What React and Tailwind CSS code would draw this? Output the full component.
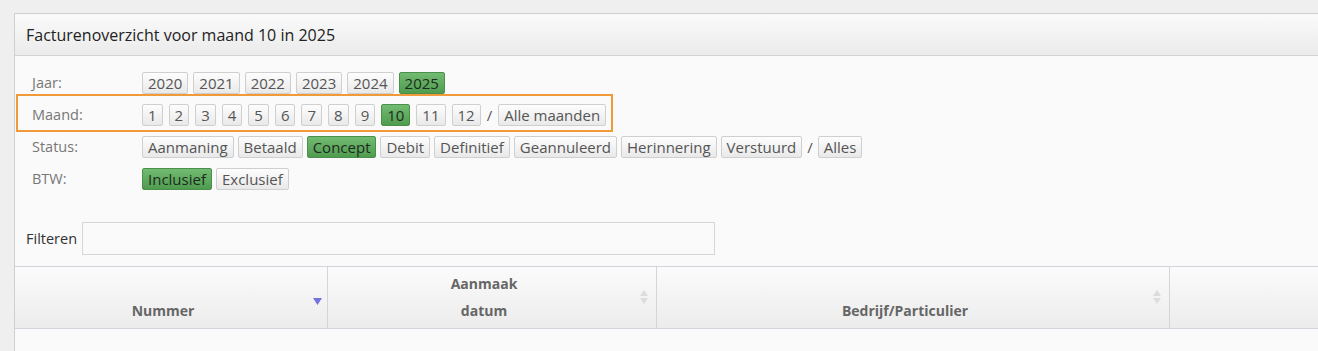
import React from "react";

const years = ["2020", "2021", "2022", "2023", "2024", "2025"];
const months = ["1", "2", "3", "4", "5", "6", "7", "8", "9", "10", "11", "12"];
const statuses = ["Aanmaning", "Betaald", "Concept", "Debit", "Definitief", "Geannuleerd", "Herinnering", "Verstuurd"];

function Btn({ label, active }) {
  return (
    <span
      className={
        "inline-flex h-[22px] items-center rounded-[2px] border px-[5px] text-[15px] leading-none " +
        (active
          ? "border-[#4a8f4a] bg-gradient-to-b from-[#72bb72] to-[#4f9c4f] text-[#1e2a1e]"
          : "border-[#cfcfcf] bg-gradient-to-b from-[#fdfdfd] to-[#e9e9e9] text-[#555]")
      }
    >
      {label}
    </span>
  );
}

function Row({ label, gap, children }) {
  return (
    <div className="flex h-[32px] items-center">
      <div className="w-[110px] text-[14.5px] text-[#777]">{label}</div>
      <div className={"flex items-center " + gap}>{children}</div>
    </div>
  );
}

function SortBoth() {
  return (
    <svg width="8" height="14" viewBox="0 0 8 14" className="absolute right-[8px] top-[23px]">
      <path d="M4 0 L8 6 L0 6 Z" fill="#dcdcdc" />
      <path d="M0 8 L8 8 L4 14 Z" fill="#dcdcdc" />
    </svg>
  );
}

export default function App() {
  return (
    <div className="h-[351px] w-[1318px] overflow-hidden bg-[#efefef] pt-[13px] pl-[14px] font-['Open_Sans',sans-serif]">
      <div className="h-full border-l border-t border-[#cfcfcf] bg-[#fafafa]">
        <div className="flex h-[42px] items-center border-b border-[#d2d2d2] bg-gradient-to-b from-[#fafafa] to-[#ebebeb] pl-[11px] text-[16px] text-[#222]">
          Facturenoverzicht voor maand 10 in 2025
        </div>

        <div className="pl-[17px] pt-[11px]">
          <Row label="Jaar:" gap="gap-[5px]">
            {years.map((y) => (
              <Btn key={y} label={y} active={y === "2025"} />
            ))}
          </Row>
          <div className="relative w-fit">
            <Row label="Maand:" gap="gap-[6px]">
              {months.map((m) => (
                <Btn key={m} label={m} active={m === "10"} />
              ))}
              <span className="text-[15px] text-[#555]">/</span>
              <Btn label="Alle maanden" />
            </Row>
            <div className="pointer-events-none absolute -top-[5px] -bottom-[1px] -left-[16px] -right-[7px] border-2 border-[#f09a3a]" />
          </div>
          <Row label="Status:" gap="gap-[4px]">
            {statuses.map((s) => (
              <Btn key={s} label={s} active={s === "Concept"} />
            ))}
            <span className="px-[1px] text-[15px] text-[#555]">/</span>
            <Btn label="Alles" />
          </Row>
          <Row label="BTW:" gap="gap-[4px]">
            <Btn label="Inclusief" active />
            <Btn label="Exclusief" />
          </Row>
        </div>

        <div className="mt-[27px] flex items-center pl-[11px]">
          <span className="mr-[5px] text-[14.5px] text-[#333]">Filteren</span>
          <div className="h-[33px] w-[633px] border border-[#d6d6d6] bg-[#fafafa]" />
        </div>

        <div className="mt-[11px] flex h-[63px] border-y border-[#d5d4dc] bg-gradient-to-b from-[#fbfbfb] to-[#ececec] text-[14px] font-bold leading-[27px] text-[#666]">
          <div className="relative flex w-[313px] flex-col items-center justify-end border-r border-[#d5d4dc] pb-[4px] pr-[16px]">
            <span>Nummer</span>
            <svg width="9" height="7" viewBox="0 0 9 7" className="absolute right-[5px] top-[31px]">
              <path d="M0 0 L9 0 L4.5 7 Z" fill="#7474e0" />
            </svg>
          </div>
          <div className="relative flex w-[329px] flex-col items-center justify-end border-r border-[#d5d4dc] pb-[4px] pr-[16px]">
            <span>Aanmaak</span>
            <span>datum</span>
            <SortBoth />
          </div>
          <div className="relative flex w-[513px] flex-col items-center justify-end border-r border-[#d5d4dc] pb-[4px] pr-[16px]">
            <span>Bedrijf/Particulier</span>
            <SortBoth />
          </div>
          <div className="flex-1" />
        </div>
      </div>
    </div>
  );
}
